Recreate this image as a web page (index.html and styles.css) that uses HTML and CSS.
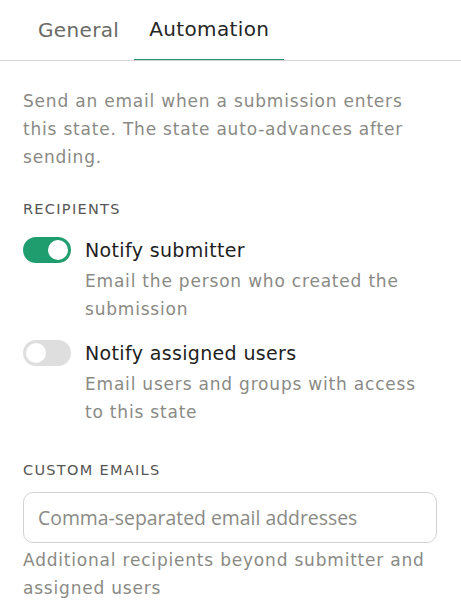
FILE: index.html
```html
<!DOCTYPE html>
<html lang="en">
<head>
<meta charset="utf-8">
<title>Automation</title>
<link rel="stylesheet" href="styles.css">
</head>
<body>
<div class="panel">
  <nav class="tabs">
    <div class="tab">General</div>
    <div class="tab active">Automation</div>
  </nav>
  <div class="content">
    <p class="intro">Send an email when a submission enters this state. The state auto-advances after sending.</p>
    <div class="section-label">RECIPIENTS</div>
    <div class="option first">
      <span class="toggle on"><span class="knob"></span></span>
      <div class="option-text">
        <div class="option-title">Notify submitter</div>
        <div class="option-desc">Email the person who created the submission</div>
      </div>
    </div>
    <div class="option second">
      <span class="toggle"><span class="knob"></span></span>
      <div class="option-text">
        <div class="option-title">Notify assigned users</div>
        <div class="option-desc">Email users and groups with access to this state</div>
      </div>
    </div>
    <div class="section-label custom">CUSTOM EMAILS</div>
    <input class="email-input" type="text" placeholder="Comma-separated email addresses">
    <div class="help">Additional recipients beyond submitter and assigned users</div>
  </div>
</div>
</body>
</html>
```

FILE: styles.css
```css
* { box-sizing: border-box; }
html, body { margin: 0; padding: 0; background: #ffffff; }
body {
  font-family: "DejaVu Sans", "Noto Sans", sans-serif;
  color: #222;
}
.panel { width: 461px; }
.tabs {
  display: flex;
  padding: 0 23px;
  border-bottom: 1px solid #d4d4d4;
  height: 61px;
}
.tab {
  padding: 0 15px;
  font-size: 20px;
  line-height: 60px;
  height: 60px;
  color: #6a6a66;
  letter-spacing: 0.35px;
}
.tab.active {
  color: #262626;
  border-bottom: 1px solid #24936c;
  line-height: 59px;
}
.content { padding: 0 23px; }
.intro {
  margin: 0;
  padding-top: 26px;
  font-size: 17px;
  line-height: 28px;
  letter-spacing: 0.8px;
  color: #8a8a85;
}
.section-label {
  margin-top: 28px;
  font-size: 14.5px;
  letter-spacing: 1.3px;
  color: #555;
  line-height: 20px;
}
.section-label.custom { margin-top: 34px; }
.option {
  display: flex;
  gap: 14px;
}
.option.first { margin-top: 16px; }
.option.second { margin-top: 15px; }
.toggle {
  flex: none;
  width: 48px;
  height: 26px;
  border-radius: 13px;
  background: #dedede;
  margin-top: 2px;
  position: relative;
}
.toggle.on { background: #1f9d6f; }
.knob {
  position: absolute;
  top: 3px;
  left: 3px;
  width: 20px;
  height: 20px;
  border-radius: 50%;
  background: #fff;
}
.toggle.on .knob { left: 25px; }
.option-title {
  font-size: 19px;
  line-height: 30px;
  letter-spacing: 0.35px;
  color: #1e1e1e;
}
.option-desc {
  margin-top: 2px;
  font-size: 17px;
  line-height: 28px;
  letter-spacing: 0.8px;
  color: #8a8a85;
}
.email-input {
  display: block;
  width: 414px;
  height: 51px;
  margin: 12px 0 0;
  border: 1px solid #d2d2d2;
  border-radius: 10px;
  padding: 0 14px;
  font-family: "Open Sans", sans-serif;
  font-size: 19.4px;
  color: #222;
  outline: none;
  background: #fff;
}
.email-input::placeholder { color: #8a8a85; }
.help {
  margin-top: 3px;
  font-size: 17px;
  line-height: 28px;
  letter-spacing: 0.8px;
  color: #8a8a85;
}
```
